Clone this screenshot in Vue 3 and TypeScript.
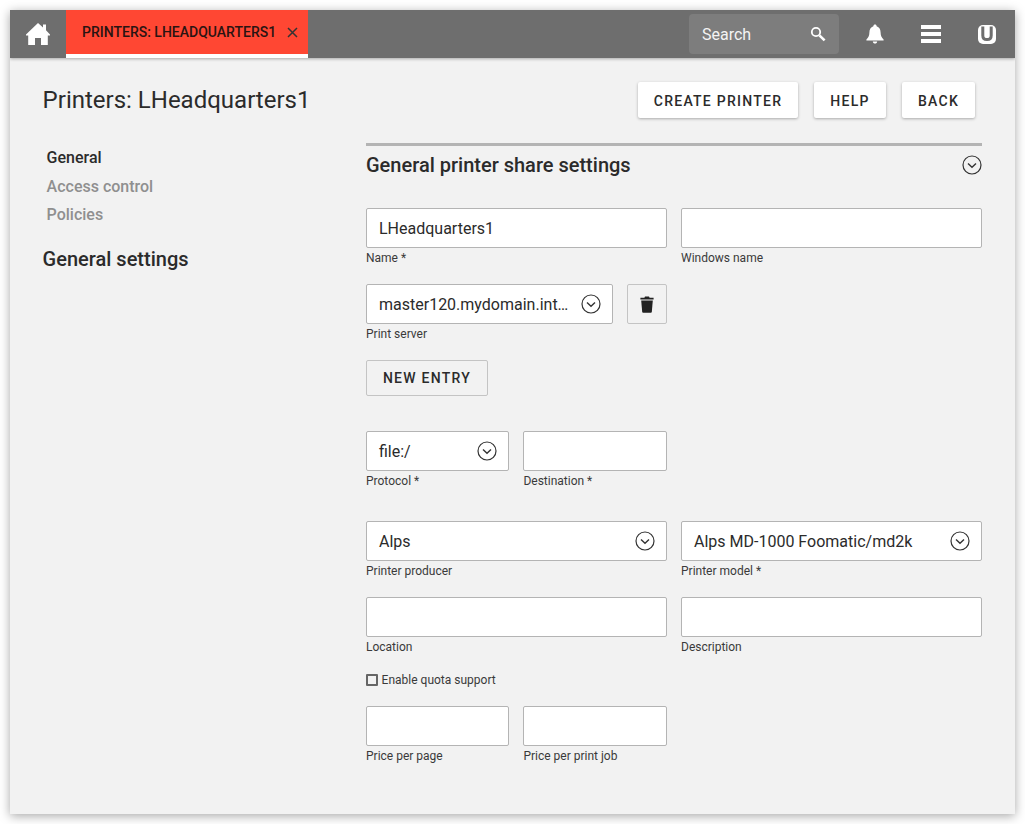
<script setup lang="ts">
const navItems = [
  { label: 'General', active: true },
  { label: 'Access control', active: false },
  { label: 'Policies', active: false }
]
</script>

<template>
  <div class="page">
    <div class="window">
      <header class="topbar">
        <div class="home">
          <svg width="26" height="24" viewBox="0 0 26 24" fill="#fff">
            <path d="M13 1 L18 5.5 V2.5 H21 V8.2 L25 12.5 V13.5 H22.8 V23 H16 V16 H10 V23 H3.2 V13.5 H1 V12.5 Z" />
          </svg>
        </div>
        <div class="tab">
          <span>PRINTERS: LHEADQUARTERS1</span>
          <svg class="tab-close" width="11" height="11" viewBox="0 0 11 11" stroke="#333" stroke-width="1.5" fill="none">
            <path d="M1 1 L10 10 M10 1 L1 10" />
          </svg>
        </div>
        <div class="spacer"></div>
        <div class="search">
          <span>Search</span>
          <svg width="16" height="16" viewBox="0 0 16 16" fill="none" stroke="#fff">
            <circle cx="6" cy="6" r="4.2" stroke-width="1.8" />
            <path d="M9.4 9.4 L14.6 14.4" stroke-width="2.6" />
          </svg>
        </div>
        <div class="top-icon">
          <svg width="20" height="20" viewBox="0 0 20 20" fill="#fff">
            <path d="M10 0.5 C11 0.5 11.6 1.2 11.6 2.2 C14.4 3 15.5 5.4 15.6 8.4 C15.7 11.6 16.6 13.6 18.6 15.4 V16.6 H1.4 V15.4 C3.4 13.6 4.3 11.6 4.4 8.4 C4.5 5.4 5.6 3 8.4 2.2 C8.4 1.2 9 .5 10 .5 Z" />
            <path d="M7.8 17.4 H12.2 C12 18.8 11.2 19.5 10 19.5 C8.8 19.5 8 18.8 7.8 17.4 Z" />
          </svg>
        </div>
        <div class="top-icon">
          <span class="burger"><i></i><i></i><i></i></span>
        </div>
        <div class="top-icon">
          <svg width="20" height="20" viewBox="0 0 20 20" fill="none">
            <rect x="1" y="1" width="18" height="19" rx="5" fill="#fff" />
            <path d="M5.8 2.6 V11.5 Q5.8 15.6 10 15.6 Q14.2 15.6 14.2 11.5 V2.6" stroke="#6e6e6e" stroke-width="3" />
          </svg>
        </div>
      </header>

      <main class="content">
        <div class="title-row">
          <h1>Printers: LHeadquarters1</h1>
          <div class="actions">
            <button class="btn raised create">CREATE PRINTER</button>
            <button class="btn raised help">HELP</button>
            <button class="btn raised back">BACK</button>
          </div>
        </div>

        <div class="columns">
          <aside class="side">
            <a v-for="item in navItems" :key="item.label" :class="['nav-item', { active: item.active }]">{{ item.label }}</a>
            <h2>General settings</h2>
          </aside>

          <section class="form">
            <div class="section-head">
              <h3>General printer share settings</h3>
              <svg class="chev" width="20" height="20" viewBox="0 0 20 20" fill="none" stroke="#333">
                <circle cx="10" cy="10" r="9" stroke-width="1.2" />
                <path d="M6 8.5 L10 12.3 L14 8.5" stroke-width="1.4" />
              </svg>
            </div>

            <div class="grid first">
              <div class="field">
                <div class="box">LHeadquarters1</div>
                <label>Name *</label>
              </div>
              <div class="field">
                <div class="box"></div>
                <label>Windows name</label>
              </div>
            </div>

            <div class="server-row">
              <div class="field server">
                <div class="box select">
                  <span class="value">master120.mydomain.int…</span>
                  <svg class="chev" width="20" height="20" viewBox="0 0 20 20" fill="none" stroke="#333">
                    <circle cx="10" cy="10" r="9" stroke-width="1.2" />
                    <path d="M6 8.5 L10 12.3 L14 8.5" stroke-width="1.4" />
                  </svg>
                </div>
                <label>Print server</label>
              </div>
              <button class="trash">
                <svg width="14" height="17" viewBox="0 0 14 17" fill="#222">
                  <path d="M5 0.5 H9 L9.6 1.8 H13.6 V3.6 H0.4 V1.8 H4.4 Z" />
                  <path d="M1.2 4.6 H12.8 L11.8 16 Q11.7 16.8 10.8 16.8 H3.2 Q2.3 16.8 2.2 16 Z" />
                </svg>
              </button>
            </div>

            <button class="btn outline">NEW ENTRY</button>

            <div class="split protocol">
              <div class="field">
                <div class="box select">
                  <span class="value">file:/</span>
                  <svg class="chev" width="20" height="20" viewBox="0 0 20 20" fill="none" stroke="#333">
                    <circle cx="10" cy="10" r="9" stroke-width="1.2" />
                    <path d="M6 8.5 L10 12.3 L14 8.5" stroke-width="1.4" />
                  </svg>
                </div>
                <label>Protocol *</label>
              </div>
              <div class="field">
                <div class="box"></div>
                <label>Destination *</label>
              </div>
            </div>

            <div class="grid producer">
              <div class="field">
                <div class="box select">
                  <span class="value">Alps</span>
                  <svg class="chev" width="20" height="20" viewBox="0 0 20 20" fill="none" stroke="#333">
                    <circle cx="10" cy="10" r="9" stroke-width="1.2" />
                    <path d="M6 8.5 L10 12.3 L14 8.5" stroke-width="1.4" />
                  </svg>
                </div>
                <label>Printer producer</label>
              </div>
              <div class="field">
                <div class="box select">
                  <span class="value">Alps MD-1000 Foomatic/md2k</span>
                  <svg class="chev" width="20" height="20" viewBox="0 0 20 20" fill="none" stroke="#333">
                    <circle cx="10" cy="10" r="9" stroke-width="1.2" />
                    <path d="M6 8.5 L10 12.3 L14 8.5" stroke-width="1.4" />
                  </svg>
                </div>
                <label>Printer model *</label>
              </div>
              <div class="field">
                <div class="box"></div>
                <label>Location</label>
              </div>
              <div class="field">
                <div class="box"></div>
                <label>Description</label>
              </div>
            </div>

            <div class="check-row">
              <span class="check"></span>
              <span>Enable quota support</span>
            </div>

            <div class="split">
              <div class="field">
                <div class="box"></div>
                <label>Price per page</label>
              </div>
              <div class="field">
                <div class="box"></div>
                <label>Price per print job</label>
              </div>
            </div>
          </section>
        </div>
      </main>
    </div>
  </div>
</template>

<style scoped>
.page {
  height: 824px;
  box-sizing: border-box;
  padding: 10px;
}

.window {
  width: 1005px;
  height: 804px;
  background: #f2f2f2;
  box-shadow: 0 2px 10px rgba(0, 0, 0, 0.35);
  font-family: Roboto, "Liberation Sans", sans-serif;
  color: #2b2b2b;
  overflow: hidden;
}

.topbar {
  height: 48px;
  display: flex;
  align-items: stretch;
  background: #6e6e6e;
  box-shadow: 0 1px 3px rgba(0, 0, 0, 0.3);
}

.home {
  width: 56px;
  display: flex;
  align-items: center;
  justify-content: center;
}

.tab {
  width: 242px;
  box-sizing: border-box;
  padding: 0 10px 0 16px;
  display: flex;
  align-items: center;
  justify-content: space-between;
  background: #ff4733;
  border-bottom: 4px solid #fff;
  color: #2a1412;
  font-size: 14px;
  font-weight: 500;
  white-space: nowrap;
}

.tab-close {
  margin-top: 1px;
}

.spacer {
  flex: 1;
}

.search {
  width: 150px;
  height: 40px;
  margin: 4px 8px 0 0;
  padding: 0 13px;
  box-sizing: border-box;
  display: flex;
  align-items: center;
  justify-content: space-between;
  background: #7d7d7d;
  border-radius: 4px;
  color: #f4f4f4;
  font-size: 16px;
}

.top-icon {
  width: 56px;
  display: flex;
  align-items: center;
  justify-content: center;
}

.burger {
  display: flex;
  flex-direction: column;
  gap: 3px;
  width: 20px;
}

.burger i {
  display: block;
  height: 4px;
  background: #fff;
}

.content {
  padding: 24px 33px 0;
}

.title-row {
  display: flex;
  justify-content: space-between;
  align-items: center;
  height: 36px;
  padding-right: 7px;
}

h1 {
  margin: 0 0 0 -0.4px;
  font-size: 24px;
  font-weight: 400;
  line-height: 36px;
}

.actions {
  display: flex;
  gap: 16px;
}

.btn {
  height: 36px;
  padding: 1px 0 0;
  border: none;
  border-radius: 2px;
  font-family: inherit;
  font-size: 14px;
  font-weight: 500;
  letter-spacing: 1.25px;
  color: #2b2b2b;
}

.raised {
  background: #fff;
  box-shadow: 0 1px 3px rgba(0, 0, 0, 0.3);
}

.create {
  width: 160px;
}

.help {
  width: 72px;
}

.back {
  width: 73px;
}

.columns {
  display: flex;
  margin-top: 25px;
}

.side {
  width: 323px;
  flex: none;
  padding-top: 5px;
}

.nav-item {
  display: block;
  margin-left: 3.6px;
  height: 28.5px;
  line-height: 19px;
  font-size: 16px;
  font-weight: 500;
  color: #8f8f8f;
}

.nav-item.active {
  color: #2b2b2b;
}

h2 {
  margin: 11px 0 0 -0.4px;
  font-size: 20px;
  font-weight: 500;
  line-height: 28px;
}

.form {
  width: 616px;
}

.section-head {
  height: 62px;
  box-sizing: border-box;
  border-top: 3px solid #b4b4b4;
  display: flex;
  justify-content: space-between;
  padding-top: 7px;
}

h3 {
  margin: 0;
  font-size: 20px;
  font-weight: 500;
  line-height: 24px;
}

.section-head .chev {
  margin-top: 2px;
}

.grid {
  display: grid;
  grid-template-columns: 301px 301px;
  column-gap: 14px;
}

.split {
  display: grid;
  grid-template-columns: 143px 143.6px;
  column-gap: 14.4px;
}

.first {
  margin-top: 3px;
}

.protocol {
  margin-top: 35px;
}

.producer {
  margin-top: 14px;
}

.field {
  height: 60px;
  margin-bottom: 16px;
}

.box {
  height: 40px;
  box-sizing: border-box;
  padding: 0 12px;
  display: flex;
  align-items: center;
  background: #fff;
  border: 1px solid #b4b4b4;
  border-radius: 2px;
  font-size: 16px;
  color: #2b2b2b;
}

.select {
  justify-content: space-between;
  padding-right: 11px;
  gap: 8px;
}

.value {
  flex: 1;
  min-width: 0;
  white-space: nowrap;
}

.chev {
  flex: none;
}

label {
  display: block;
  margin-top: 3px;
  font-size: 12px;
  line-height: 15px;
  color: #3a3a3a;
}

.server-row {
  display: flex;
  gap: 14px;
}

.server {
  width: 247px;
}

.trash {
  width: 40px;
  height: 40px;
  padding: 0;
  background: #f2f2f2;
  border: 1px solid #c4c4c4;
  border-radius: 2px;
  display: flex;
  align-items: center;
  justify-content: center;
}

.outline {
  display: block;
  width: 122px;
  padding: 0;
  background: #f2f2f2;
  border: 1px solid #c4c4c4;
}

.check-row {
  height: 16px;
  margin: -1px 0 18px;
  display: flex;
  align-items: center;
  gap: 3.6px;
  font-size: 12px;
  color: #3a3a3a;
}

.check {
  width: 12px;
  height: 12px;
  box-sizing: border-box;
  border: 2px solid #666;
  border-radius: 1px;
  background: #f2f2f2;
}
</style>

<style>
html,
body {
  background: #fff;
}
</style>
